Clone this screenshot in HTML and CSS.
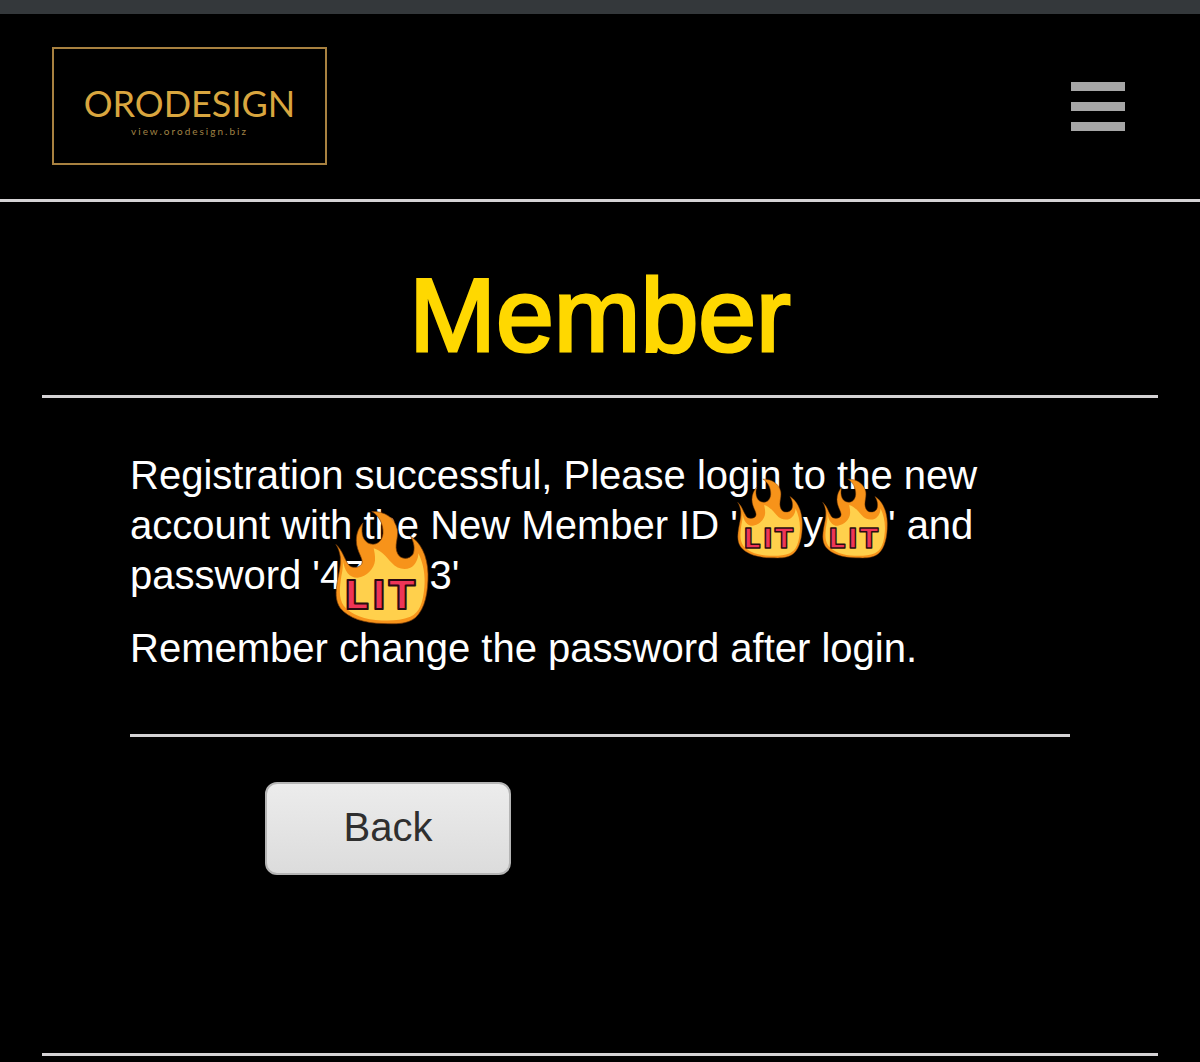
FILE: index.html
```html
<!DOCTYPE html>
<html lang="en">
  <head>
    <meta charset="UTF-8" />
    <meta name="viewport" content="width=device-width, initial-scale=1.0" />
    <title>Member</title>
    <link rel="stylesheet" href="styles.css">
  </head>
  <body>
    <svg class="symbols" aria-hidden="true">
      <symbol id="flame" viewBox="20 14 282 344">
        <path fill="#f7931a" stroke="#7a3c08" stroke-width="2" d="M23 117 C42 134 48 160 60 177 C69 189 92 188 100 176 C108 160 84 140 84 105 C84 82 92 66 104 52 C98 75 100 100 118 112 C140 124 162 110 164 84 C166 55 150 28 130 18 C165 16 200 35 207 72 C211 100 196 120 208 145 C217 163 243 163 254 146 C261 130 257 108 246 92 C275 108 298 150 299 205 C300 260 290 310 262 336 C235 358 200 355 165 354 C110 354 60 338 36 308 C20 285 22 258 27 228 C32 200 38 180 36 155 C34 140 30 128 23 117 Z" />
        <path fill="#ffd04c" d="M43 160 C48 200 65 218 88 217 C115 213 138 190 140 165 C141 150 138 138 136 128 C158 134 172 152 190 172 C205 190 228 195 246 187 C262 178 270 160 270 143 C284 170 292 208 288 246 C284 290 274 322 246 334 C220 345 192 346 160 345 C110 344 68 328 46 301 C30 276 34 246 39 212 C44 192 44 176 43 160 Z" />
        <text class="lit" x="47 130 181" y="311">LIT</text>
      </symbol>
    </svg>

    <div class="status-bar"></div>

    <header class="header">
      <a class="logo" href="#">
        <span class="logo-name">ORODESIGN</span>
        <span class="logo-url">view.orodesign.biz</span>
      </a>
      <button class="menu-btn" type="button" aria-label="Menu">
        <span></span>
        <span></span>
        <span></span>
      </button>
    </header>

    <main class="container">
      <h1>Member</h1>
      <hr />

      <div class="content">
        <p>Registration successful, Please login to the new account with the New Member ID '<span class="cover cover-wide"><svg class="sticker"><use href="#flame" /></svg></span>y<span class="cover cover-wide"><svg class="sticker"><use href="#flame" /></svg></span>' and password '47<span class="cover cover-wide"><svg class="sticker sticker-large"><use href="#flame" /></svg></span>3'</p>
        <p>Remember change the password after login.</p>
        <hr />
        <button class="back-btn" type="button">Back</button>
      </div>

      <hr />
    </main>
  </body>
</html>
```

FILE: styles.css
```css
:root {
  --gold: #d9a63f;
  --line: #d5d3d5;
}

* {
  box-sizing: border-box;
}

body {
  margin: 0;
  background-color: #000;
  color: #fff;
  font-family: 'Liberation Sans', Arial, Helvetica, sans-serif;
  font-size: 40px;
  line-height: 50px;
}

.symbols {
  position: absolute;
  width: 0;
  height: 0;
}

.status-bar {
  height: 14px;
  background-color: #34383b;
}

.header {
  display: flex;
  justify-content: space-between;
  align-items: center;
  padding: 33px 75px 34px 52px;
  border-bottom: 3px solid var(--line);
}

.logo {
  display: flex;
  flex-direction: column;
  align-items: center;
  justify-content: center;
  width: 275px;
  height: 118px;
  padding-top: 14px;
  border: 2px solid #a88140;
  color: var(--gold);
  font-family: Lato, sans-serif;
  text-decoration: none;
}

.logo-name {
  font-size: 36px;
  font-weight: 400;
  line-height: 36px;
}

.logo-url {
  color: #a18345;
  font-size: 10px;
  line-height: 20px;
  letter-spacing: 2px;
}

.menu-btn {
  display: flex;
  flex-direction: column;
  gap: 11px;
  padding: 0;
  border: none;
  background: none;
  cursor: pointer;
}

.menu-btn span {
  width: 54px;
  height: 9px;
  background-color: #a6a6a6;
}

.container {
  padding: 0 42px 4px;
}

h1 {
  margin: 0;
  padding: 54px 0 21px;
  color: #ffd800;
  font-size: 104px;
  font-weight: 400;
  line-height: 118px;
  text-align: center;
  -webkit-text-stroke: 3px #ffd800;
}

hr {
  height: 3px;
  margin: 0;
  border: none;
  background-color: var(--line);
}

.content {
  padding: 52px 88px 178px;
}

p {
  margin: 0 0 23px;
}

.content hr {
  margin-top: 61px;
}

/* stickers sit over the private characters */
.cover {
  position: relative;
  display: inline-block;
}

.cover-wide {
  width: 65px;
}

.sticker {
  position: absolute;
  right: 0;
  bottom: -20px;
  width: 66px;
  height: 81px;
}

.sticker-large {
  bottom: -36px;
  width: 94px;
  height: 115px;
}

.lit {
  fill: #ee3557;
  stroke: #2b0b10;
  stroke-width: 6px;
  stroke-linejoin: round;
  font-family: 'DejaVu Sans', sans-serif;
  font-size: 116px;
  font-weight: 700;
}

.back-btn {
  display: block;
  width: 246px;
  height: 93px;
  margin: 45px 0 0 135px;
  padding: 0 0 4px;
  border: 2px solid #b5b5b5;
  border-radius: 12px;
  background: linear-gradient(#ececec, #dcdcdc);
  color: #2f2f2f;
  font: inherit;
  cursor: pointer;
}
```
